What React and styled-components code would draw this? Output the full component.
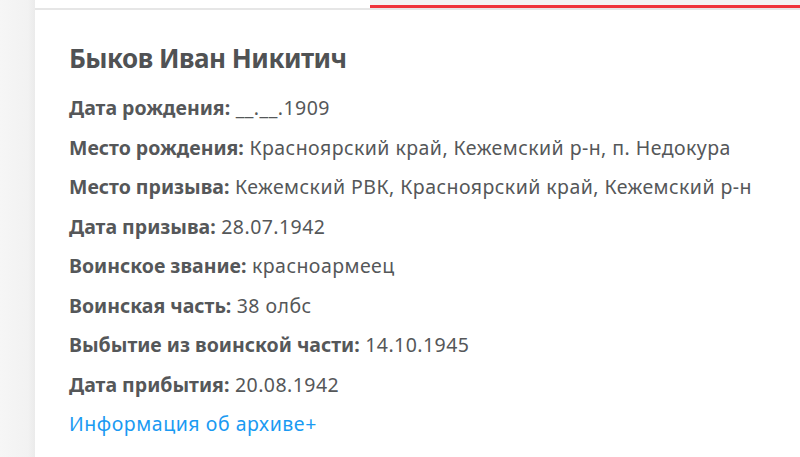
import React from 'react';
import styled, { createGlobalStyle } from 'styled-components';

const GlobalStyle = createGlobalStyle`
  html, body {
    margin: 0;
    padding: 0;
    background: #f4f4f4;
  }
  body {
    font-family: "Noto Sans", "Open Sans", sans-serif;
  }
`;

const Page = styled.div`
  display: flex;
  min-height: 457px;
  background: linear-gradient(90deg, #f6f6f6 0, #f2f2f2 28px, #ebebeb 35px);
`;

const Gutter = styled.div`
  width: 35px;
  flex-shrink: 0;
`;

const Card = styled.div`
  flex: 1;
  background: #fff;
  display: flex;
  flex-direction: column;
`;

const Tabs = styled.div`
  display: flex;
  height: 10px;
  border-bottom: 2px solid #e6e6e6;
  box-sizing: border-box;
`;

const Tab = styled.div`
  flex: ${p => (p.$active ? '0 0 430px' : '1')};
  background: ${p => (p.$active ? '#f4f4f4' : '#fff')};
  border-bottom: ${p => (p.$active ? '3px solid #f0343c' : 'none')};
`;

const Content = styled.div`
  padding: 30px 34px 20px 34px;
  color: #555759;
`;

const Name = styled.h2`
  margin: 0 0 12px;
  font-size: 26px;
  font-weight: 700;
  color: #505254;
  letter-spacing: -0.5px;
`;

const Row = styled.div`
  font-size: 19.5px;
  line-height: 39.5px;
  letter-spacing: 0.45px;
  white-space: nowrap;
`;

const Label = styled.span`
  font-weight: 700;
  letter-spacing: 0;
`;

const ArchiveLink = styled.a`
  display: block;
  font-size: 19.5px;
  line-height: 39.5px;
  letter-spacing: 0.55px;
  color: #1a9af2;
  text-decoration: none;
`;

const facts = [
  ['Дата рождения:', '__.__.1909'],
  ['Место рождения:', 'Красноярский край, Кежемский р-н, п. Недокура'],
  ['Место призыва:', 'Кежемский РВК, Красноярский край, Кежемский р-н'],
  ['Дата призыва:', '28.07.1942'],
  ['Воинское звание:', 'красноармеец'],
  ['Воинская часть:', '38 олбс'],
  ['Выбытие из воинской части:', '14.10.1945'],
  ['Дата прибытия:', '20.08.1942'],
];

const App = () => (
  <>
    <GlobalStyle />
    <Page>
      <Gutter />
      <Card>
        <Tabs>
          <Tab />
          <Tab $active />
        </Tabs>
        <Content>
          <Name>Быков Иван Никитич</Name>
          {facts.map(([label, value]) => (
            <Row key={label}>
              <Label>{label}</Label> {value}
            </Row>
          ))}
          <ArchiveLink href="#">Информация об архиве+</ArchiveLink>
        </Content>
      </Card>
    </Page>
  </>
);

export default App;
